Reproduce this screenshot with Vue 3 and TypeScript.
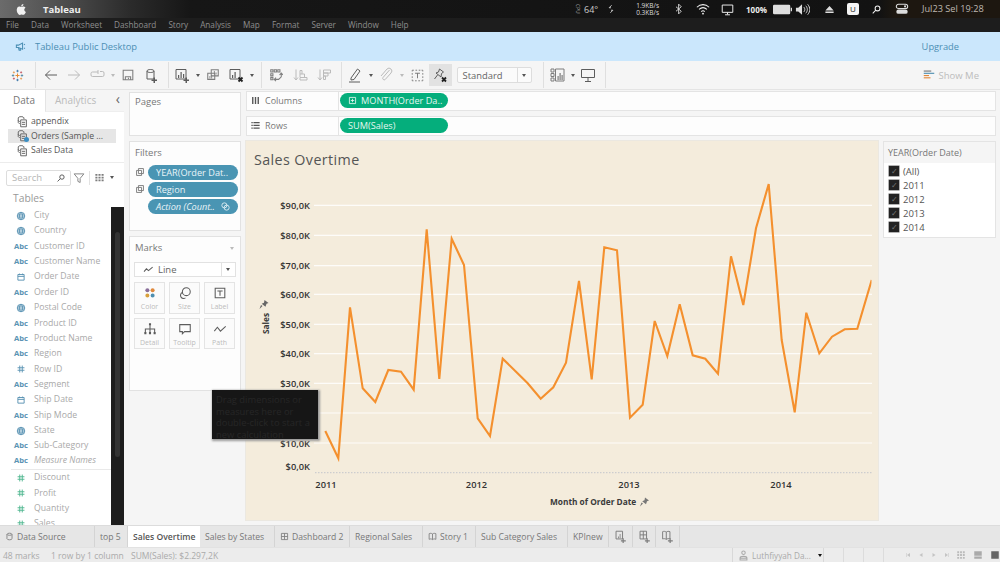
<script setup lang="ts">
import { h } from 'vue'

const iconPaths: Record<string, string[]> = {
  apple: ['F:M11.4 8.4c0-1.7 1.4-2.5 1.5-2.6-.8-1.2-2.1-1.3-2.5-1.4-1.1-.1-2.1.6-2.6.6s-1.4-.6-2.3-.6c-1.2 0-2.2.7-2.8 1.7-1.2 2.1-.3 5.2.9 6.9.6.8 1.3 1.8 2.2 1.7.9 0 1.2-.6 2.2-.6s1.4.6 2.3.5c.9 0 1.5-.8 2.1-1.7.7-1 .9-1.9 1-1.9-.1 0-1.9-.7-2-2.6zM9.6 3.3c.5-.6.8-1.4.7-2.2-.7 0-1.5.5-2 1-.4.5-.8 1.3-.7 2.1.8.1 1.5-.4 2-.9z'],
  back: ['M14 8H2.500M7 3.500 2.500 8 7 12.500'],
  forward: ['M2 8h11.500M9 3.500 13.500 8 9 12.500'],
  loop: ['M11 4.500h2.500a1.500 1.500 0 0 1 1.500 1.500v2a1.500 1.500 0 0 1-1.500 1.500h-10A1.500 1.500 0 0 1 2 8V6.500A1.500 1.500 0 0 1 3.500 5H9M9 3v4'],
  save: ['M2.500 2.500h11v11h-11zM5 13.500V10h6v3.500M8.500 11v1.500'],
  db: ['M4 4c0-2 7-2 7 0v8H4zM4 4c0 2 7 2 7 0', 'F:M10.500 10.500h1.500v2h2V14h-2v2h-1.500v-2h-2v-1.500h2z'],
  sheetAdd: ['M2 2.500h10v9.500H2z', 'F:M4 8h1.200v3H4zM6.500 5h1.200v6H6.500zM9 7h1.200v4H9z', 'F:M11.500 10.500h1.500v2h2V14h-2v2h-1.500v-2h-2v-1.500h2z'],
  dup: ['M6 2h8v7H6zM2 6h8v7H2z', 'F:M9 3.500h1v4H9zM11 5h1v2.500h-1zM4 9h1v3H4zM6 8h1v4H6z'],
  sheetX: ['M2 2.500h10v9.500H2z', 'F:M4 8h1.200v3H4zM6.500 5h1.200v6H6.500z', 'X:M10.500 10.500l4 4M14.500 10.500l-4 4'],
  swap: ['M2 2h2.500v2.500H2zM6 2h2.500v2.500H6zM10 2h2.500v2.500H10zM2 6.500h2.500V9H2zM2 11h2.500v2.500H2zM6 13h5l3-3V6M12 8l2-2.200L16 8M8 11l-2 2 2 2'],
  sortA: ['M4 2.500v10M2 10.500l2 2.500 2-2.500M8 13h7V10.500H8zM8 10V7h4.500v3M8 7V3.500h2V7'],
  sortD: ['M4 2.500v10M2 10.500l2 2.500 2-2.500M7.500 3h7v3h-7zM7.500 6h4.500v3H7.500zM7.500 9h2v3.500h-2z'],
  pen: ['M4 11 10.500 2l2.500 2L7 12.500l-3 .5zM2 15h11'],
  clip: ['M11.500 3 5 10.500a1.500 1.500 0 0 0 2.200 2L13 6a2.800 2.800 0 0 0-4-4L3 9'],
  textBox: ['M2.500 2.500h11v11h-11z', 'F:M5 5h6v1.200H8.600V11H7.400V6.200H5z'],
  textDash: ['M1.500 1.500h2M5.500 1.500h2M9.500 1.500h2M13 1.500h1.500v1.500M14.500 5v2M14.500 9v2M14.500 13v1.500H13M11 14.500H9M7 14.500H5M3 14.500H1.500V13M1.500 11V9M1.500 7V5M1.500 3V1.500', 'F:M5 4.500h6v1.200H8.600V11.500H7.400V5.700H5z'],
  pinX: ['M7.500 2l4 3-2 1.500-.5 3.500-5-4 2.500-1zM5.500 8 2.500 12', 'X:M10 10.500l4 4M14 10.500l-4 4'],
  cards: ['M2 2h3v3H2zM2 6.500h3v3H2zM2 11h3v3H2zM6.500 2H15v12H6.500z', 'F:M8.500 9h1.200v4H8.500zM10.500 6h1.200v7h-1.200zM12.500 8h1.200v5h-1.200z'],
  present: ['M1.500 2.500h13v8h-13zM8 10.500V14M5 14.500h6'],
  megaphone: ['M2 6h3l6-3v9L5 9.500H2zM5 9.500l1 4h2l-1-3.500M13 5.500l1.500-1M13 10l1.500 1'],
  source: ['M4 3.500C4 1.500 11 1.500 11 3.500V5M4 3.500V9c0 1 1 1.500 2 1.500M4 6.500c0 1 1 1.500 2 1.500', 'M7 6h7v8.500H7zM8.500 9h4M8.500 11.500h4'],
  funnel: ['M1.500 2.500h13L9.500 8.500V14l-3-1.500V8.500z'],
  grid: ['F:M2 3h3v2.500H2zM6.500 3h3v2.500h-3zM11 3h3v2.500h-3zM2 7h3v2.500H2zM6.500 7h3v2.500h-3zM11 7h3v2.500h-3zM2 11h3v2.500H2zM6.500 11h3v2.500h-3zM11 11h3v2.500h-3z'],
  search: ['M9.500 3a3.500 3.500 0 1 1 0 7 3.500 3.500 0 0 1 0-7zM7 9l-4.500 4.500'],
  globe: ['M8 2a6 6 0 1 1 0 12A6 6 0 0 1 8 2zM2 8h12M3 5h10M3 11h10M8 2c-3.500 3.500-3.500 8.500 0 12M8 2c3.500 3.500 3.500 8.500 0 12'],
  cal: ['M3 4h10v9H3zM3 7h10M5.500 2.500V5M10.500 2.500V5'],
  hash: ['M6 2.500v11M10 2.500v11M2.500 6h11M2.500 10h11'],
  line: ['M1.500 11 5 7l3 2.500L14 4.500'],
  dots: ['F:M5 2.500a2.300 2.300 0 1 1 0 4.600 2.300 2.300 0 0 1 0-4.600z|#8a6f9b', 'F:M11 2.500a2.300 2.300 0 1 1 0 4.600 2.300 2.300 0 0 1 0-4.600z|#e0893c', 'F:M5 8.500a2.300 2.300 0 1 1 0 4.600 2.300 2.300 0 0 1 0-4.600z|#d8a03c', 'F:M11 8.500a2.300 2.300 0 1 1 0 4.600 2.300 2.300 0 0 1 0-4.600z|#4f8fb0'],
  size: ['M9.500 2a4.500 4.500 0 1 1 0 9 4.500 4.500 0 0 1 0-9zM5 7.500a3.500 3.500 0 1 0 3.500 6'],
  detail: ['F:M6.800 1.500h2.400v2.400H6.800zM1.500 11.500h2.400v2.400H1.500zM6.800 11.500h2.400v2.400H6.800zM12.100 11.500h2.400v2.400h-2.400z', 'M8 4v7.500M2.700 11.500V8h10.600v3.500'],
  tooltip: ['M2 3h12v8H7.500L5 13.500V11H2z'],
  path: ['M1.500 10.500 5 6l3.500 4.500L14.500 5'],
  columns: ['F:M3 3h2v10H3zM7 3h2v10H7zM11 3h2v10h-2z'],
  rows: ['F:M2 3h2v1.800H2zM5 3h9v1.800H5zM2 7h2v1.800H2zM5 7h9v1.800H5zM2 11h2v1.800H2zM5 11h9v1.800H5z'],
  plusBox: ['M2.500 2.500h11v11h-11zM8 5v6M5 8h6'],
  filterCopy: ['M5.500 2.500h8v8h-8zM2.500 5.500h8v8h-8z'],
  cylinder: ['M3.500 4c0-2.500 9-2.500 9 0v8c0 2.500-9 2.500-9 0zM3.500 4c0 2.500 9 2.500 9 0'],
  dash: ['M2.500 2.500h11v11h-11zM8 2.500v11M2.500 8h11'],
  story: ['M2 3c2-1 4-1 6 .500 2-1.500 4-1.500 6-.500v10c-2-1-4-1-6 .500-2-1.500-4-1.500-6-.500zM8 3.500v10'],
  sheetNew: ['M2.500 1.500h8v9.500h-8z', 'F:M5 8h1v2H5zM7 5h1v5H7z', 'F:M10.500 10h1.500v2.500h2.500V14H12v2h-1.500v-2H8.500v-1.500h2z'],
  dashNew: ['M2.500 1.500h8v9.500h-8zM6.500 1.500V11M2.500 6h8', 'F:M10.500 10h1.500v2.500h2.500V14H12v2h-1.500v-2H8.500v-1.500h2z'],
  storyNew: ['M2 2c1.500-.500 3-.500 4.500.500 1.500-1 3-1 4.500-.500v9c-1.500-.500-3-.500-4.500.500-1.500-1-3-1-4.500-.500zM6.500 2.500v9', 'F:M10.500 10h1.500v2.500h2.500V14H12v2h-1.500v-2H8.500v-1.500h2z'],
  user: ['M8 1.500a2.500 2.500 0 1 1 0 5 2.500 2.500 0 0 1 0-5zM3 14.500v-3c0-3 10-3 10 0v3zM3 12h10'],
  gaugeUp: ['M9 2 5 6h3M7 14l4-4H8'],
  bt: ['M4 5l7 6-3.500 3.500v-13L11 5l-7 6'],
  wifi: ['M1 6c4-4 10-4 14 0M3.500 8.500c3-2.800 6-2.800 9 0M6 11c1.300-1.200 2.700-1.200 4 0', 'F:M8 12l1.300 1.300L8 14.500l-1.300-1.200z'],
  monitor: ['M1.500 2.500h13v9h-13zM8 11.500V14M5 14.500h6'],
  battery: ['F:M1 4h12.500a1 1 0 0 1 1 1v6a1 1 0 0 1-1 1H1a1 1 0 0 1-1-1V5a1 1 0 0 1 1-1zM15 6.500h1v3h-1z'],
  volume: ['F:M1 6h2.500L7.500 2.500v11L3.500 10H1z', 'M9.500 5.500c1.300 1.500 1.300 3.500 0 5M11.500 4c2.200 2.500 2.200 5.500 0 8M13.500 2.500c3 3.500 3 7.500 0 11'],
  eject: ['F:M8 3l6 6.500H2zM2 11h12v2H2z'],
  toggle: ['M4 2.500h8a2.500 2.500 0 0 1 0 5H4a2.500 2.500 0 0 1 0-5z', 'F:M4 8.500h8a2.500 2.500 0 0 1 0 5H4a2.500 2.500 0 0 1 0-5z', 'F:M11.500 3.800a1.200 1.200 0 1 1 0 2.400 1.200 1.200 0 0 1 0-2.400z'],
  viewFit: ['F:M2 2h3v3H2zM6.500 2h3v3h-3zM11 2h3v3h-3zM2 6.500h3v3H2zM6.500 6.500h3v3h-3zM11 6.500h3v3h-3zM2 11h3v3H2zM6.500 11h3v3h-3zM11 11h3v3h-3z'],
  viewMid: ['F:M2 2h12v7H2zM2 10.500h12V14H2z'],
  viewFull: ['F:M2 2h12v12H2z'],
  first: ['F:M4 4h1v8H4zM12 4v8L6 8z'],
  prev: ['F:M11 4v8L5 8z'],
  next: ['F:M5 4v8l6-4z'],
  last: ['F:M11 4h1v8h-1zM4 4v8l6-4z'],
  showme: ['F:M1 2h10v1.500H1z|#777', 'F:M1 5h14v1.500H1z|#4f8fb0', 'F:M1 8h7v1.500H1z|#e0893c', 'F:M1 11h9v1.500H1z|#e0893c'],
}

const Icon = (props: { name: string; s?: number }) => {
  const size = props.s ?? 16
  return h(
    'svg',
    { viewBox: '0 0 16 16', width: size, height: size, fill: 'none', stroke: 'currentColor', 'stroke-width': size < 12 ? 1.5 : size < 15 ? 1.200 : 1, class: 'ic' },
    (iconPaths[props.name] ?? []).map((raw) => {
      if (raw.startsWith('F:')) {
        const [d, col] = raw.slice(2).split('|')
        return h('path', { d, fill: col ?? 'currentColor', stroke: 'none' })
      }
      if (raw.startsWith('X:')) return h('path', { d: raw.slice(2), stroke: '#222', 'stroke-width': 1.8 })
      return h('path', { d: raw })
    }),
  )
}
Icon.props = ['name', 's']

const menus = ['File', 'Data', 'Worksheet', 'Dashboard', 'Story', 'Analysis', 'Map', 'Format', 'Server', 'Window', 'Help']
const sources = [
  { name: 'appendix', active: false },
  { name: 'Orders (Sample ...', active: true },
  { name: 'Sales Data', active: false },
]
type Field = { name: string; type: 'abc' | 'globe' | 'cal' | 'hash'; measure?: boolean; italic?: boolean; rule?: boolean }
const fields: Field[] = [
  { name: 'City', type: 'globe' },
  { name: 'Country', type: 'globe' },
  { name: 'Customer ID', type: 'abc' },
  { name: 'Customer Name', type: 'abc' },
  { name: 'Order Date', type: 'cal' },
  { name: 'Order ID', type: 'abc' },
  { name: 'Postal Code', type: 'globe' },
  { name: 'Product ID', type: 'abc' },
  { name: 'Product Name', type: 'abc' },
  { name: 'Region', type: 'abc' },
  { name: 'Row ID', type: 'hash' },
  { name: 'Segment', type: 'abc' },
  { name: 'Ship Date', type: 'cal' },
  { name: 'Ship Mode', type: 'abc' },
  { name: 'State', type: 'globe' },
  { name: 'Sub-Category', type: 'abc' },
  { name: 'Measure Names', type: 'abc', italic: true, rule: true },
  { name: 'Discount', type: 'hash', measure: true },
  { name: 'Profit', type: 'hash', measure: true },
  { name: 'Quantity', type: 'hash', measure: true },
  { name: 'Sales', type: 'hash', measure: true },
]
const marks = [
  { label: 'Color', icon: 'dots' },
  { label: 'Size', icon: 'size' },
  { label: 'Label', icon: 'textBox' },
  { label: 'Detail', icon: 'detail' },
  { label: 'Tooltip', icon: 'tooltip' },
  { label: 'Path', icon: 'path' },
]
const years = ['(All)', '2011', '2012', '2013', '2014']
const tabs = [
  { label: 'Data Source', w: 95, icon: 'cylinder' },
  { label: 'top 5', w: 33 },
  { label: 'Sales Overtime', w: 72, active: true },
  { label: 'Sales by States', w: 75 },
  { label: 'Dashboard 2', w: 75, icon: 'dash' },
  { label: 'Regional Sales', w: 73 },
  { label: 'Story 1', w: 53, icon: 'story' },
  { label: 'Sub Category Sales', w: 92 },
  { label: 'KPInew', w: 41 },
]
const grid = [
  { y: 205.3, t: '$90,0K' },
  { y: 235.3, t: '$80,0K' },
  { y: 265.7, t: '$70,0K' },
  { y: 294.3, t: '$60,0K' },
  { y: 324.3, t: '$50,0K' },
  { y: 353.7, t: '$40,0K' },
  { y: 383.3, t: '$30,0K' },
  { y: 413, t: '$20,0K' },
  { y: 443, t: '$10,0K' },
]
const xLabels = [
  { x: 326, t: '2011' },
  { x: 476.5, t: '2012' },
  { x: 629, t: '2013' },
  { x: 781, t: '2014' },
]
const linePts =
  '325.3,431 338.3,458.3 350,307.3 362.7,388.3 375.3,402 388.3,370 401,371.7 413.7,389.7 426.7,229.3 439.3,379 451.7,238.7 464,265 477.7,418.3 490,436 502.7,358.7 515,370.7 527.7,383.3 540.7,398.7 553.3,387.3 566,362.7 579,281 591.7,379.3 604.3,247.3 617,250.3 630,417.7 642.7,404.7 654.7,321 667.3,356 679.700,304.3 692.7,355.3 705.3,358.7 718,373.7 731,256.3 743.3,305 756,228.3 768.7,184 781.7,340 794.7,412.3 806.3,312.7 819.3,353.3 832,336.7 844.7,329.3 857.3,328.7 871.7,280'
</script>

<template>
  <div class="app">
    <header class="osbar">
      <Icon name="apple" :s="13" class="os-apple" />
      <strong class="os-app">Tableau</strong>
      <div class="os-right">
        <span class="os-cpu">CPU</span>
        <span class="os-temp">64°</span>
        <Icon name="gaugeUp" :s="10" class="os-gauge" />
        <span class="os-net"><span>1.9KB/s</span><span>0.3KB/s</span></span>
        <Icon name="bt" :s="12" class="os-bt" />
        <Icon name="wifi" :s="14" class="os-wifi" />
        <Icon name="monitor" :s="13" class="os-monitor" />
        <b class="os-pct">100%</b>
        <Icon name="battery" :s="19" class="os-batt" />
        <Icon name="volume" :s="15" class="os-vol" />
        <Icon name="eject" :s="11" class="os-eject" />
        <span class="os-u">U</span>
        <Icon name="search" :s="11" class="os-search" />
        <Icon name="toggle" :s="14" class="os-toggle" />
        <span class="os-clock">Jul23 Sel 19:28</span>
      </div>
    </header>
    <nav class="menubar">
      <span v-for="m in menus" :key="m">{{ m }}</span>
    </nav>
    <div class="promo">
      <div class="promo-left">
        <Icon name="megaphone" :s="11" />
        <span>Tableau Public Desktop</span>
      </div>
      <span class="upgrade">Upgrade</span>
    </div>

    <div class="toolbar">
      <svg class="logo" viewBox="0 0 16 16" width="13" height="13" fill="none" stroke-width="1.200">
        <path d="M8 1v3M6.500 2.500h3M8 12v3M6.500 13.500h3" stroke="#4a7fb0" />
        <path d="M1 8h3M2.500 6.500v3M12 8h3M13.500 6.500v3" stroke="#5e8fa8" />
        <path d="M8 5.500v5M5.500 8h5" stroke="#e8892f" />
        <path d="M3.500 3v2.400M2.300 4.200h2.400M12.500 10.600V13M11.300 11.800h2.400" stroke="#e8a05c" />
        <path d="M12.500 3v2.400M11.300 4.200h2.400M3.500 10.600V13M2.300 11.800h2.400" stroke="#c9626b" />
      </svg>
      <i class="sep sep-first"></i>
      <button class="tb"><Icon name="back" class="c-dark" /></button>
      <button class="tb"><Icon name="forward" class="c-off" /></button>
      <button class="tb"><Icon name="loop" class="c-off" /></button><i class="caret off"></i>
      <button class="tb"><Icon name="save" :s="14" class="c-mid" /></button>
      <button class="tb"><Icon name="db" class="c-dark" /></button>
      <i class="sep"></i>
      <button class="tb"><Icon name="sheetAdd" class="c-dark" /></button><i class="caret"></i>
      <button class="tb"><Icon name="dup" :s="14" class="c-mid" /></button>
      <button class="tb"><Icon name="sheetX" class="c-dark" /></button><i class="caret"></i>
      <i class="sep"></i>
      <button class="tb wide"><Icon name="swap" :s="14" class="c-mid" /></button>
      <button class="tb wide"><Icon name="sortA" class="c-off" /></button>
      <button class="tb wide"><Icon name="sortD" class="c-off" /></button>
      <i class="sep"></i>
      <button class="tb"><Icon name="pen" class="c-dark" /></button><i class="caret"></i>
      <button class="tb"><Icon name="clip" class="c-off" /></button><i class="caret off"></i>
      <button class="tb"><Icon name="textDash" :s="13" class="c-mid" /></button>
      <button class="tb pressed"><Icon name="pinX" class="c-dark" /></button>
      <div class="std"><span>Standard</span><span class="std-btn"><i class="caret"></i></span></div>
      <i class="sep sep-far"></i>
      <button class="tb"><Icon name="cards" class="c-mid" /></button><i class="caret"></i>
      <button class="tb"><Icon name="present" class="c-dark" /></button>
      <i class="sep sep-wide"></i>
      <div class="showme"><Icon name="showme" :s="12" /><span>Show Me</span></div>
    </div>

    <div class="workspace">
      <aside class="datapane">
        <div class="dp-tabs">
          <span class="dp-tab on">Data</span>
          <span class="dp-tab">Analytics<em class="chev">‹</em></span>
        </div>
        <ul class="sources">
          <li v-for="s in sources" :key="s.name" :class="{ on: s.active }">
            <Icon name="source" :s="13" />
            <span>{{ s.name }}</span>
            <i v-if="s.active" class="check-dot"></i>
          </li>
        </ul>
        <div class="searchrow">
          <div class="searchbox"><span>Search</span><Icon name="search" :s="10" /></div>
          <Icon name="funnel" :s="12" class="c-mid funnel" />
          <i class="mini-sep"></i>
          <Icon name="grid" :s="11" class="c-mid gridic" />
          <i class="caret"></i>
        </div>
        <div class="tables">Tables</div>
        <div class="fieldwrap">
          <ul class="fields">
            <li v-for="f in fields" :key="f.name" :class="{ rule: f.rule, italic: f.italic }">
              <span class="ftype" :class="{ green: f.measure }">
                <b v-if="f.type === 'abc'">Abc</b>
                <Icon v-else :name="f.type" :s="10" />
              </span>
              <span class="fname">{{ f.name }}</span>
            </li>
          </ul>
          <div class="scroll"><i></i></div>
        </div>
      </aside>

      <aside class="cards">
        <section class="card pages"><h4>Pages</h4></section>
        <section class="card filters">
          <h4>Filters</h4>
          <div class="filter"><Icon name="filterCopy" :s="10" class="c-mid" /><span class="fpill">YEAR(Order Dat..</span></div>
          <div class="filter"><Icon name="filterCopy" :s="10" class="c-mid" /><span class="fpill">Region</span></div>
          <div class="filter"><i class="noicon"></i><span class="fpill action"><em>Action (Count..</em><svg viewBox="0 0 16 16" width="9" height="9" fill="none" stroke="currentColor" stroke-width="1.500"><circle cx="6" cy="6" r="4.500" /><circle cx="10" cy="10" r="4.500" /></svg></span></div>
        </section>
        <section class="card marks">
          <div class="marks-head"><h4>Marks</h4><i class="caret off"></i></div>
          <div class="marktype">
            <Icon name="line" :s="11" class="c-dark" />
            <span>Line</span>
            <span class="mt-btn"><i class="caret"></i></span>
          </div>
          <div class="markgrid">
            <div v-for="m in marks" :key="m.label" class="markbtn">
              <Icon :name="m.icon" :s="14" class="c-dark" />
              <span>{{ m.label }}</span>
            </div>
          </div>
        </section>
      </aside>

      <main class="work">
        <div class="shelf">
          <div class="shelf-label"><Icon name="columns" :s="11" /><span>Columns</span></div>
          <span class="pill"><Icon name="plusBox" :s="9" /><span>MONTH(Order Da..</span></span>
        </div>
        <div class="shelf">
          <div class="shelf-label"><Icon name="rows" :s="11" /><span>Rows</span></div>
          <span class="pill"><span>SUM(Sales)</span></span>
        </div>
        <div class="viewrow">
          <section class="sheet">
            <h2>Sales Overtime</h2>
            <svg class="chart" viewBox="246 174 632 346">
              <defs>
                <clipPath id="plotclip"><rect x="315" y="174" width="556.500" height="320" /></clipPath>
              </defs>
              <g v-for="g in grid" :key="g.t">
                <line x1="314" x2="872" :y1="g.y" :y2="g.y" stroke="#fdfcf9" stroke-width="1.200" />
                <text x="310" :y="g.y + 3.500" text-anchor="end" class="axis">{{ g.t }}</text>
              </g>
              <text x="310" y="469.500" text-anchor="end" class="axis">$0,0K</text>
              <line x1="315" x2="872" y1="472.700" y2="472.700" stroke="#c4c6cc" stroke-dasharray="1.500 1.500" />
              <text v-for="x in xLabels" :key="x.t" :x="x.x" y="487.500" text-anchor="middle" class="axis">{{ x.t }}</text>
              <polyline :points="linePts" fill="none" stroke="#f4902e" stroke-width="2.100" stroke-linejoin="miter" clip-path="url(#plotclip)" />
              <text transform="translate(268.500 334) rotate(-90)" class="axis title">Sales</text>
              <path d="M264.500 300l4 3-2 .700-1 3-3.800-3 2.300-1zM262.500 306l-3 3 1.500-4z" fill="#666" />
              <text x="550" y="505" class="axis title">Month of Order Date</text>
              <path d="M645 497.500l4 3-2 .700-1 3-3.800-3 2.300-1zM643 503.500l-3 3 1.500-4z" fill="#777" />
            </svg>
          </section>
          <aside class="legend">
            <h5>YEAR(Order Date)</h5>
            <ul>
              <li v-for="y in years" :key="y"><i class="cb">✓</i><span>{{ y }}</span></li>
            </ul>
          </aside>
        </div>
      </main>

      <div class="tip">Drag dimensions or measures here or double-click to start a new calculation</div>
    </div>

    <div class="tabs">
      <div
        v-for="t in tabs"
        :key="t.label"
        class="tab"
        :class="{ active: t.active }"
        :style="{ width: t.w + 'px' }"
      >
        <Icon v-if="t.icon" :name="t.icon" :s="9" class="c-mid" />
        <span>{{ t.label }}</span>
      </div>
      <div class="tab newtab"><Icon name="sheetNew" :s="13" class="c-mid" /></div>
      <div class="tab newtab"><Icon name="dashNew" :s="13" class="c-mid" /></div>
      <div class="tab newtab"><Icon name="storyNew" :s="13" class="c-mid" /></div>
    </div>

    <footer class="status">
      <span class="st-marks">48 marks</span>
      <span class="st-rows">1 row by 1 column</span>
      <span class="st-sum">SUM(Sales): $2.297,2K</span>
      <div class="st-user"><Icon name="user" :s="11" /><span>Luthfiyyah Da...</span><i class="caret"></i></div>
      <i class="st-cell"></i>
      <i class="st-cell"></i>
      <i class="st-cell"></i>
      <div class="st-nav">
        <Icon name="first" :s="8" /><Icon name="prev" :s="8" /><Icon name="next" :s="8" /><Icon name="last" :s="8" />
      </div>
      <div class="st-views">
        <Icon name="viewFit" :s="10" class="v1" /><Icon name="viewMid" :s="10" class="v2" /><Icon name="viewFull" :s="10" class="v3" />
      </div>
    </footer>
  </div>
</template>

<style>
html, body { margin: 0; padding: 0; background: #f5f5f5; }
</style>

<style scoped>
.app {
  width: 1000px;
  height: 562px;
  overflow: hidden;
  display: flex;
  flex-direction: column;
  font-family: "Open Sans", "Liberation Sans", sans-serif;
  font-size: 9px;
  color: #777;
  background: #f5f5f5;
}
ul { list-style: none; margin: 0; padding: 0; }
h2, h4, h5 { margin: 0; font-weight: 400; }
i { font-style: normal; display: block; }
.ic { display: block; flex: none; }
.c-dark { color: #5c5c5c; }
.c-mid { color: #7d7d7d; }
.c-off { color: #bbb; }

/* macOS bar */
.osbar {
  height: 18px;
  flex: none;
  display: flex;
  align-items: center;
  background: linear-gradient(90deg, #6b6b6b 0, #4a4a4a 70px, #2b2b2b 130px, #161616 190px, #121212 880px, #1d1710 895px);
  color: #e6e6e6;
}
.os-apple { margin-left: 15px; color: #f2f2f2; }
.os-app { margin-left: 15px; font-size: 9.500px; font-weight: 700; color: #eee; }
.os-right { margin-left: auto; height: 18px; display: flex; align-items: center; }
.os-cpu { writing-mode: vertical-rl; font-size: 4.500px; line-height: 5px; margin-right: 4px; letter-spacing: .3px; color: #bbb; }
.os-temp { font-size: 9px; width: 22px; color: #ccc; }
.os-gauge { color: #ccc; margin-right: 16px; }
.os-net { display: flex; flex-direction: column; font-size: 6.500px; line-height: 7.500px; align-items: flex-end; width: 27px; color: #ddd; margin-right: 14px; }
.os-bt { margin-right: 11px; color: #ddd; }
.os-wifi { margin-right: 11px; color: #eee; }
.os-monitor { margin-right: 12px; color: #eee; }
.os-pct { font-size: 8px; font-weight: 700; color: #eee; width: 27px; }
.os-batt { margin-right: 3px; color: #ddd; }
.os-vol { margin-right: 14px; color: #ddd; }
.os-eject { margin-right: 12px; color: #ddd; }
.os-u { width: 12px; height: 12px; border-radius: 2px; background: #f4f4f4; color: #222; font-size: 8px; line-height: 12px; text-align: center; margin-right: 12px; }
.os-search { margin-right: 13px; color: #eee; }
.os-toggle { color: #ddd; margin-right: 13px; }
.os-clock { width: 78px; height: 18px; line-height: 18px; font-size: 9.200px; color: #bdb8b0; box-sizing: border-box; }

.menubar {
  height: 14px;
  flex: none;
  display: flex;
  gap: 12px;
  padding-left: 6px;
  background: #1d1d1d;
  color: #8d8d8d;
  font-size: 8.200px;
  line-height: 14px;
}

.promo {
  height: 29px;
  flex: none;
  display: flex;
  align-items: center;
  justify-content: space-between;
  background: #cbe7fc;
  color: #4b8fb4;
  font-size: 9.400px;
  padding: 0 41px 0 15px;
}
.promo-left { display: flex; align-items: center; gap: 9px; }
.upgrade { font-size: 9.300px; margin-top: -1px; }

.toolbar {
  height: 29px;
  flex: none;
  display: flex;
  align-items: center;
  padding-left: 6px;
  background: #f5f5f5;
  border-bottom: 1px solid #e4e4e4;
  box-sizing: border-box;
}
.logo { width: 23px; flex: none; }
.tb {
  all: unset;
  width: 23px;
  height: 22px;
  flex: none;
  display: flex;
  align-items: center;
  justify-content: center;
}
.tb.wide { width: 24px; }
.tb.pressed { background: #e2e2e2; }
.caret {
  width: 8px;
  flex: none;
  height: 0;
  position: relative;
}
.caret::after {
  content: "";
  position: absolute;
  left: 2px;
  top: -1.500px;
  border-left: 2.500px solid transparent;
  border-right: 2.500px solid transparent;
  border-top: 3px solid #555;
}
.caret.off::after { border-top-color: #bbb; }
.sep { width: 1px; height: 26px; background: #dfdfdf; flex: none; margin: 0 2px 0 5px; }
.sep-first { margin: 0 3.500px 0 6px; }
.sep-wide { margin: 0 3px 0 5px; }
.sep-far { margin: 0 2px 0 11px; }
.std {
  margin-left: 5px;
  width: 75px;
  height: 16px;
  flex: none;
  box-sizing: border-box;
  border: 1px solid #ddd;
  border-radius: 2px;
  background: #fbfbfb;
  display: flex;
  align-items: center;
  justify-content: space-between;
  padding-left: 5px;
  font-size: 9.400px;
  color: #666;
}
.std-btn { width: 13px; height: 14px; border-left: 1px solid #ddd; display: flex; align-items: center; justify-content: center; }
.std-btn .caret, .mt-btn .caret { width: 5px; }
.std-btn .caret::after, .mt-btn .caret::after { left: 0; }
.showme { margin-left: auto; display: flex; align-items: center; gap: 4px; font-size: 9.500px; color: #bcbcbc; padding-right: 21px; }

/* workspace */
.workspace { position: relative; flex: 1; min-height: 0; display: flex; align-items: stretch; background: #f5f5f5; }

.datapane { width: 124px; flex: none; background: #fff; display: flex; flex-direction: column; overflow: hidden; }
.dp-tabs { height: 22px; flex: none; display: flex; background: #f5f5f5; }
.dp-tab { flex: 1; font-size: 10px; line-height: 21px; color: #bbb; padding-left: 9px; position: relative; box-sizing: border-box; border-bottom: 1px solid #eee; border-left: 1px solid #e4e4e4; }
.dp-tab:first-child { flex: none; width: 45px; padding-left: 13px; }
.dp-tab.on { background: #fff; color: #777; border: 0; }
.chev { position: absolute; right: 4px; top: -2px; font-size: 14px; font-style: normal; color: #666; }
.sources { height: 50px; flex: none; padding: 0 8px; border-bottom: 1px solid #ececec; }
.sources li { height: 14.500px; line-height: 14.500px; display: flex; align-items: center; gap: 3px; padding-left: 7px; position: relative; color: #555; font-size: 8.700px; }
.sources li:first-child { margin-top: 2px; }
.sources li .ic { color: #666; }
.sources li.on { background: #e6e6e6; }
.check-dot { position: absolute; left: 16px; top: 8px; width: 5px; height: 5px; border-radius: 50%; background: #3b8fc4; }
.searchrow { height: 29px; flex: none; display: flex; align-items: center; padding-left: 6px; }
.searchbox { width: 65px; height: 16px; box-sizing: border-box; border: 1px solid #ddd; border-radius: 2px; display: flex; align-items: center; justify-content: space-between; padding: 0 4px 0 5px; color: #b5b5b5; font-size: 9.500px; flex: none; }
.searchbox .ic { color: #555; }
.funnel { margin-left: 2px; }
.mini-sep { width: 1px; height: 14px; background: #e2e2e2; margin: 0 4px; }
.gridic { margin-right: 3px; }
.tables { height: 15px; flex: none; padding-left: 13px; line-height: 12px; font-size: 10.300px; color: #999; }
.fieldwrap { flex: 1; min-height: 0; display: flex; overflow: hidden; }
.fields { flex: 1; min-width: 0; padding-top: 1px; }
.fields li { height: 15.360px; line-height: 15.360px; display: flex; align-items: center; white-space: nowrap; color: #a9a9a9; font-size: 8.700px; }
.fields li.italic .fname { font-style: italic; }
.fields li.rule { height: 16.500px; padding-bottom: 1.200px; box-sizing: border-box; border-bottom: 1px solid #e9e9e9; margin: 0 0 0 11px; }
.fields li.rule .ftype { margin-left: -11px; }
.ftype { width: 34px; flex: none; display: flex; justify-content: center; color: #5b93b3; padding-left: 8px; box-sizing: border-box; }
.ftype b { font-size: 7.600px; font-weight: 700; }
.ftype.green { color: #4fb68f; }
.scroll { width: 13px; flex: none; background: #1d1d1d; position: relative; }
.scroll i { position: absolute; left: 4px; top: 25px; width: 5px; height: 225px; border-radius: 3px; background: #333; }

.cards { width: 112px; flex: none; margin-left: 5px; padding-top: 2px; display: flex; flex-direction: column; gap: 5px; }
.card { background: #fdfdfd; border: 1px solid #e2e2e2; box-sizing: border-box; padding: 5px 4px 0; }
.card h4 { font-size: 9.500px; color: #777; line-height: 12px; margin-left: 1px; }
.pages { height: 44px; padding-top: 3px; }
.filters { height: 90px; }
.filters h4 { margin-bottom: 5.500px; }
.filter { display: flex; align-items: center; gap: 3px; height: 15px; margin-bottom: 2px; padding-left: 1px; }
.noicon { width: 10px; flex: none; }
.fpill { width: 90px; flex: none; height: 15px; border-radius: 8px; background: #4a95b3; color: #e9f4f8; font-size: 9.200px; line-height: 15px; padding-left: 8px; box-sizing: border-box; display: flex; align-items: center; white-space: nowrap; }
.fpill.action { justify-content: space-between; padding-right: 8px; }
.marks { height: 155px; }
.marks-head { display: flex; justify-content: space-between; align-items: center; }
.marktype { margin-top: 8px; height: 15px; border: 1px solid #e2e2e2; display: flex; align-items: center; box-sizing: border-box; padding-left: 8px; gap: 4px; font-size: 9.500px; color: #666; background: #fff; }
.mt-btn { margin-left: auto; width: 13px; height: 13px; border-left: 1px solid #e2e2e2; display: flex; align-items: center; justify-content: center; }
.markgrid { margin-top: 5px; display: grid; grid-template-columns: repeat(3, 31px); grid-auto-rows: 31.500px; column-gap: 4px; row-gap: 4px; }
.markbtn { border: 1px solid #e4e4e4; background: #fbfbfb; box-sizing: border-box; display: flex; flex-direction: column; align-items: center; padding-top: 3px; gap: 3px; font-size: 7px; line-height: 8px; color: #bbb; }

.work { flex: 1; min-width: 0; margin: .5px 4px 0 5px; display: flex; flex-direction: column; gap: 5px; }
.shelf { height: 20px; flex: none; display: flex; align-items: center; background: #fdfdfd; border: 1px solid #e4e4e4; box-sizing: border-box; }
.shelf-label { width: 92px; height: 100%; box-sizing: border-box; border-right: 1px solid #e4e4e4; display: flex; align-items: center; gap: 4px; padding-left: 3px; font-size: 9px; color: #777; }
.shelf-label .ic { color: #555; }
.pill { margin-left: 1px; width: 108px; height: 15px; border-radius: 8px; background: #05ae7c; color: #e4f7f0; display: flex; align-items: center; gap: 4px; padding-left: 8px; box-sizing: border-box; font-size: 9.200px; white-space: nowrap; }
.viewrow { flex: 1; min-height: 0; display: flex; gap: 5px; margin-bottom: 5px; align-items: flex-start; }
.sheet { width: 632px; height: 379.500px; flex: none; background: #f4ecdc; box-sizing: border-box; display: flex; flex-direction: column; box-shadow: 0 0 0 1px #ebe8e1; }
.sheet h2 { height: 33.500px; flex: none; padding-left: 8px; font-size: 14.300px; line-height: 38px; color: #555; letter-spacing: .4px; box-sizing: border-box; }
.chart { display: block; width: 632px; height: 346px; flex: none; }
.axis { font-family: "Open Sans", "Liberation Sans", sans-serif; font-size: 9.300px; font-weight: 600; fill: #333; }
.title { font-size: 8.300px; font-weight: 700; fill: #3a3a3a; }
.legend { flex: 1; height: 97px; background: #fff; border: 1px solid #e4e4e4; box-sizing: border-box; }
.legend h5 { height: 21px; background: #f5f5f5; font-size: 9px; line-height: 21px; padding-left: 4px; color: #777; }
.legend ul { padding-top: 1.500px; }
.legend li { height: 14px; display: flex; align-items: center; padding-left: 5px; gap: 4px; font-size: 9.500px; color: #555; }
.cb { width: 10px; height: 10px; background: #222; color: #777; font-size: 8px; line-height: 10px; text-align: center; box-shadow: 0 0 0 .5px #666; }

.tip {
  position: absolute;
  left: 212px;
  top: 300px;
  width: 106px;
  height: 49px;
  box-sizing: border-box;
  padding: 4px 1px 0 4px;
  background: #161616;
  color: #262626;
  font-size: 9.400px;
  line-height: 11.700px;
  box-shadow: 1px 1px 2px 1px #9a9a9a;
}

.tabs { height: 22px; flex: none; display: flex; background: #e6e6e6; border-top: 1px solid #dcdcdc; box-sizing: border-box; }
.tab { height: 100%; box-sizing: border-box; border-right: 1px solid #d4d4d4; display: flex; align-items: center; gap: 3px; padding-left: 5px; font-size: 8.600px; color: #777; white-space: nowrap; flex: none; }
.tab.active { background: #fff; color: #555; font-weight: 600; border: 0; }
.newtab { width: 23.500px; padding-left: 5px; }

.status { height: 15px; flex: none; display: flex; align-items: center; background: #ececec; color: #aaa; font-size: 8.500px; border-top: 1px solid #e2e2e2; box-sizing: border-box; white-space: nowrap; }
.st-marks { margin-left: 3px; width: 48px; flex: none; }
.st-rows { width: 80px; flex: none; }
.st-sum { width: 601px; flex: none; }
.st-user { width: 92px; height: 100%; box-sizing: border-box; flex: none; border-left: 1px solid #d8d8d8; border-right: 1px solid #d8d8d8; display: flex; align-items: center; padding-left: 5px; gap: 3px; font-size: 8.200px; }
.st-user .caret { margin-left: 2px; }
.st-user .caret::after { border-top-color: #111; }
.st-cell { width: 20px; height: 100%; flex: none; border-right: 1px solid #dcdcdc; box-sizing: border-box; }
.st-nav { margin-left: 20px; width: 44px; display: flex; gap: 5px; color: #c4c4c4; flex: none; }
.st-views { margin-left: 8px; display: flex; gap: 7px; }
.v1 { color: #bbb; }
.v2 { color: #aaa; }
.v3 { color: #666; }
</style>
